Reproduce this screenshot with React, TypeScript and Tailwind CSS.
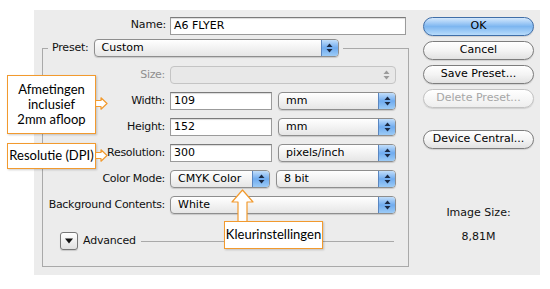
function Arrows({ blue }: { blue: boolean }) {
  const c = blue ? "#1b2a44" : "#9a9a9a";
  return (
    <svg width="7" height="10" viewBox="0 0 7 10">
      <polygon points="3.5,0.5 6.5,4 0.5,4" fill={c} />
      <polygon points="0.5,6 6.5,6 3.5,9.5" fill={c} />
    </svg>
  );
}

function Select({ value, w, disabled = false }: { value?: string; w: string; disabled?: boolean }) {
  return (
    <div
      className={`flex h-[18px] ${w} overflow-hidden rounded-[4px] border ${
        disabled ? "border-[#c4c4c4] bg-[#e8e8e8]" : "border-[#8e8e8e] bg-linear-to-b from-white to-[#e6e6e6] shadow-[0_1px_1px_rgba(0,0,0,0.15)]"
      }`}
    >
      <span className="flex-1 pl-[7px] leading-[16px] text-black">{value}</span>
      <span
        className={`flex w-[17px] items-center justify-center ${
          disabled ? "" : "border-l border-[#5a86c0] bg-linear-to-b from-[#c2defa] via-[#6fabef] to-[#9ccbf6]"
        }`}
      >
        <Arrows blue={!disabled} />
      </span>
    </div>
  );
}

function Input({ value, w }: { value: string; w: string }) {
  return (
    <div className={`h-[18px] ${w} border border-[#9b9b9b] border-t-[#7a7a7a] bg-white pl-[3px] leading-[16px] text-black shadow-[inset_0_1px_1px_rgba(0,0,0,0.15)]`}>
      {value}
    </div>
  );
}

function Btn({ label, kind = "normal" }: { label: string; kind?: "ok" | "normal" | "off" }) {
  const cls =
    kind === "ok"
      ? "border-[#3f6ea8] bg-linear-to-b from-[#d4e8fc] via-[#7db6f0] to-[#b8dcfb] text-black"
      : kind === "off"
      ? "border-[#c2c2c2] bg-linear-to-b from-white to-[#eeeeee] text-[#a6a6a6]"
      : "border-[#7d7d7d] bg-linear-to-b from-white via-[#f4f4f4] to-[#e2e2e2] text-black";
  return (
    <div className={`flex h-[19px] w-[111px] items-center justify-center rounded-full border shadow-[0_1px_1px_rgba(0,0,0,0.12)] ${cls}`}>
      {label}
    </div>
  );
}

function Row({ label, children, dim = false }: { label: string; children: React.ReactNode; dim?: boolean }) {
  return (
    <div className="flex h-[18px] items-center">
      <div className={`flex w-[127px] shrink-0 justify-end whitespace-nowrap pr-[5px] tracking-[-0.3px] ${dim ? "text-[#8f8f8f]" : "text-[#111]"}`}>
        <span>{label}</span>
      </div>
      <div className="flex gap-[6px]">{children}</div>
    </div>
  );
}

function RightArrow({ x, y }: { x: number; y: number }) {
  return (
    <svg className="absolute" style={{ left: x, top: y }} width="13" height="13" viewBox="0 0 13 13">
      <polygon points="0.5,3.5 6,3.5 6,0.8 12,6.5 6,12.2 6,9.5 0.5,9.5" fill="white" stroke="#f29a2e" strokeWidth="1.2" strokeLinejoin="round" />
    </svg>
  );
}

export default function App() {
  return (
    <div className="relative h-[289px] w-[550px] overflow-hidden bg-white pl-[34px] pt-[10px] font-['DejaVu_Sans',sans-serif] text-[11px]">
      <div className="flex h-[265px] w-[506px] bg-[#ececec]">
        {/* left side */}
        <div className="w-[389px] pl-[8px] pt-[6px]">
          <div className="flex h-[19px] items-center">
            <span className="w-[128px] pr-[4px] text-right tracking-[-0.2px] text-[#111]">Name:</span>
            <Input value="A6 FLYER" w="w-[236px]" />
          </div>

          <fieldset className="mt-[4px] h-[228px] w-[367px] border border-[#a9a9a9]">
            <legend className="ml-[5px] px-[4px]">
              <div className="flex h-[18px] items-center gap-[5px]">
                <span className="tracking-[-0.2px] text-[#111]">Preset:</span>
                <Select value="Custom" w="w-[245px]" />
              </div>
            </legend>

            <div className="mt-[9px] flex flex-col gap-[8px]">
              <Row label="Size:" dim>
                <Select w="w-[226px]" disabled />
              </Row>
              <Row label="Width:">
                <Input value="109" w="w-[102px]" />
                <Select value="mm" w="w-[118px]" />
              </Row>
              <Row label="Height:">
                <Input value="152" w="w-[102px]" />
                <Select value="mm" w="w-[118px]" />
              </Row>
              <Row label="Resolution:">
                <Input value="300" w="w-[102px]" />
                <Select value="pixels/inch" w="w-[118px]" />
              </Row>
              <Row label="Color Mode:">
                <Select value="CMYK Color" w="w-[100px]" />
                <Select value="8 bit" w="w-[120px]" />
              </Row>
              <Row label="Background Contents:">
                <Select value="White" w="w-[226px]" />
              </Row>
            </div>

            <div className="ml-[17px] mt-[18px] flex items-center">
              <div className="flex h-[18px] w-[18px] items-center justify-center rounded-[3px] border border-[#777] bg-linear-to-b from-white to-[#e0e0e0] shadow-[0_1px_1px_rgba(0,0,0,0.15)]">
                <svg width="8" height="6" viewBox="0 0 8 6">
                  <polygon points="0,0.5 8,0.5 4,5.5" fill="#111" />
                </svg>
              </div>
              <span className="ml-[5px] tracking-[-0.2px] text-[#111]">Advanced</span>
              <div className="ml-[5px] h-px w-[253px] bg-[#a9a9a9]" />
            </div>
          </fieldset>
        </div>

        {/* right side */}
        <div className="flex w-[111px] flex-col pt-[7px]">
          <div className="flex flex-col gap-[5px]">
            <Btn label="OK" kind="ok" />
            <Btn label="Cancel" />
            <Btn label="Save Preset..." />
            <Btn label="Delete Preset..." kind="off" />
          </div>
          <div className="mt-[22px]">
            <Btn label="Device Central..." />
          </div>
          <div className="mt-[56px] text-center text-[#111]">Image Size:</div>
          <div className="mt-[7px] text-center text-[#111]">8,81M</div>
        </div>
      </div>

      {/* annotations */}
      <div className="absolute left-[7px] top-[75px] flex h-[59px] w-[89px] flex-col items-center justify-center border border-[#f29a2e] bg-white font-['Lato',sans-serif] text-[13px] leading-[15px] text-black shadow-[1px_1px_2px_rgba(0,0,0,0.2)]">
        <span>Afmetingen</span>
        <span>inclusief</span>
        <span>2mm afloop</span>
      </div>
      <RightArrow x={95} y={97} />

      <div className="absolute left-[7px] top-[143px] flex h-[26px] w-[89px] items-center justify-center whitespace-nowrap border border-[#f29a2e] bg-white font-['Lato',sans-serif] text-[13px] text-black shadow-[1px_1px_2px_rgba(0,0,0,0.2)]">
        Resolutie (DPI)
      </div>
      <RightArrow x={95} y={149} />

      <svg className="absolute left-[231px] top-[189px]" width="23" height="34" viewBox="0 0 23 34">
        <polygon points="11.5,1 22,13 16,13 16,33 7,33 7,13 1,13" fill="white" stroke="#f29a2e" strokeWidth="1.2" strokeLinejoin="round" />
      </svg>
      <div className="absolute left-[224px] top-[221px] flex h-[28px] w-[99px] items-center justify-center whitespace-nowrap border border-[#f29a2e] bg-white font-['Lato',sans-serif] text-[13px] text-black shadow-[1px_1px_2px_rgba(0,0,0,0.2)]">
        Kleurinstellingen
      </div>
    </div>
  );
}
